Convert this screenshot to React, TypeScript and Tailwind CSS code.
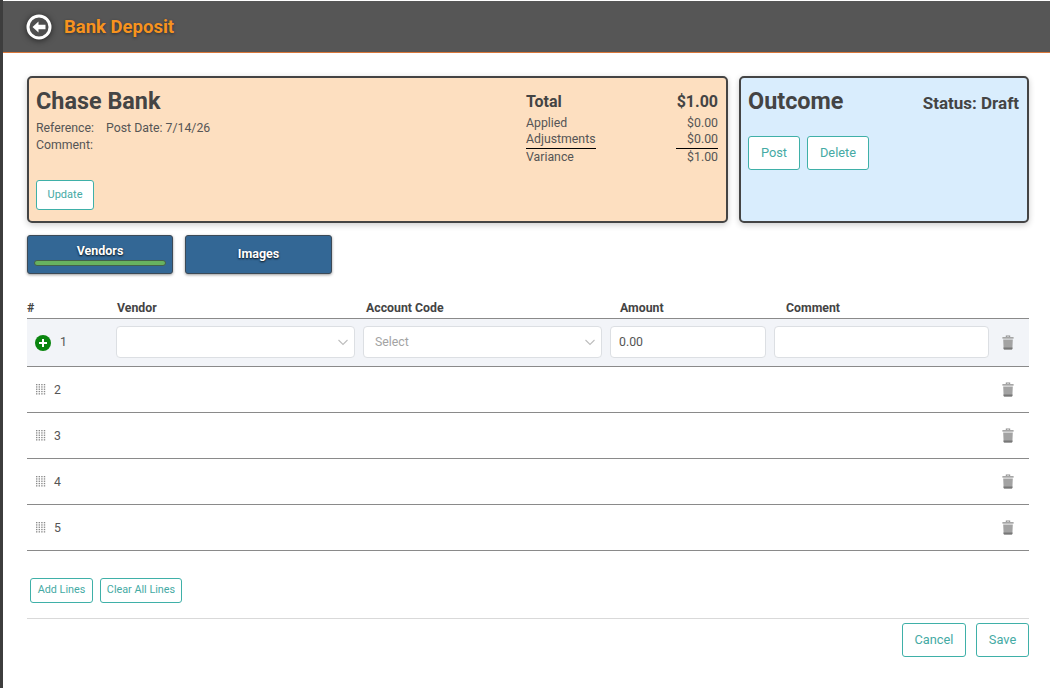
import React from 'react';

const font = { fontFamily: 'Roboto, sans-serif' };

function OutlineButton({ label, className }: { label: string; className: string }) {
  return (
    <button className={`rounded-[3px] border border-[#3fb0a8] bg-white text-[#45aaa4] ${className}`}>
      {label}
    </button>
  );
}

function Chevron() {
  return (
    <svg width="12" height="12" viewBox="0 0 12 12" className="absolute right-[5px] top-[9px]" fill="none" stroke="#bdbdbd" strokeWidth="1.1">
      <path d="M1.5 4 L6 8.5 L10.5 4" />
    </svg>
  );
}

function Trash() {
  return (
    <svg width="12" height="15" viewBox="0 0 12 15">
      <path d="M3.8 2V.6h4.4V2H7.2v-.5H4.8V2z" fill="#8f8f8f" />
      <path d="M0.4 2h11.2v1.7H0.4z" fill="#a6a6a6" />
      <path d="M1.2 4.6h9.6l-.4 8.8c0 .6-.5 1-1.1 1H2.7c-.6 0-1.1-.4-1.1-1z" fill="#a3a3a3" />
      <path d="M1.5 12.4h9l-.1 1c0 .6-.5 1-1.1 1H2.7c-.6 0-1.1-.4-1.1-1z" fill="#787878" />
    </svg>
  );
}

function Grip() {
  return (
    <svg width="10" height="11" viewBox="0 0 10 11" fill="#8a8a8a">
      {[0, 2.3, 4.6, 6.9, 9.2].map(y =>
        [0, 2.6, 5.2, 7.8].map(x => <rect key={`${x}-${y}`} x={x} y={y} width="1.4" height="1.3" />)
      )}
    </svg>
  );
}

function BackIcon() {
  return (
    <svg width="26" height="26" viewBox="0 0 26 26" className="drop-shadow-[0_1px_3px_rgba(0,0,0,0.6)]">
      <circle cx="13" cy="13" r="11" fill="#4f4f4f" stroke="white" strokeWidth="3" />
      <path d="M6.5 13 L12.5 7.5 V10.7 H19.5 V15.3 H12.5 V18.5 Z" fill="white" />
    </svg>
  );
}

function AddIcon() {
  return (
    <svg width="16" height="16" viewBox="0 0 16 16">
      <circle cx="8" cy="8" r="8" fill="#0a850f" />
      <path d="M8 4v8M4 8h8" stroke="white" strokeWidth="2" />
    </svg>
  );
}

function AmountRow({ label, value, underline }: { label: string; value: string; underline?: boolean }) {
  return (
    <div className="flex justify-between text-[12.3px] leading-[16px] text-[#555]">
      <span className={underline ? 'border-b border-black pb-px' : ''}>{label}</span>
      <span className={underline ? 'w-[42px] border-b border-black pb-px text-right' : ''}>{value}</span>
    </div>
  );
}

export default function App() {
  return (
    <div className="flex h-[688px] w-[1050px] overflow-hidden bg-white" style={font}>
      <div className="w-[3px] shrink-0 bg-[#3d3d3d]" />
      <div className="min-w-0 flex-1">
        <header className="mt-px flex h-[52px] items-center gap-[12px] border-b border-[#d9773a] bg-[#565656] pl-[23px]">
          <BackIcon />
          <h1 className="pt-[2px] text-[18.5px] font-bold text-[#f7931e] [text-shadow:0_1px_3px_rgba(0,0,0,0.45)]">Bank Deposit</h1>
        </header>

        <div className="mt-[23px] flex gap-[11px] pl-[24px] pr-[21px]">
          <section className="flex h-[147px] w-[701px] justify-between rounded-[5px] border-2 border-[#444] bg-[#fddfc0] pl-[7px] pr-[8px] pt-[8px] shadow-[0_2px_6px_rgba(0,0,0,0.2)]">
            <div>
              <h2 className="text-[23.4px] font-bold leading-[30px] text-[#444]">Chase Bank</h2>
              <div className="mt-[4px] flex gap-[12px] text-[12.3px] leading-[16.5px] text-[#555]">
                <span>Reference:</span>
                <span>Post Date: 7/14/26</span>
              </div>
              <div className="text-[12.3px] leading-[16.5px] text-[#555]">Comment:</div>
              <OutlineButton label="Update" className="mt-[27px] block h-[30px] w-[58px] text-[11px]" />
            </div>
            <div className="w-[192px] pt-[5px]">
              <div className="flex justify-between text-[16px] font-bold leading-[22px] text-[#444]">
                <span>Total</span>
                <span>$1.00</span>
              </div>
              <div className="mt-[2px]">
                <AmountRow label="Applied" value="$0.00" />
                <AmountRow label="Adjustments" value="$0.00" underline />
                <AmountRow label="Variance" value="$1.00" />
              </div>
            </div>
          </section>

          <section className="h-[147px] w-[290px] rounded-[5px] border-2 border-[#444] bg-[#d9edfd] pl-[7px] pr-[8px] pt-[8px] shadow-[0_2px_6px_rgba(0,0,0,0.2)]">
            <div className="flex h-[30px] items-center justify-between">
              <h2 className="text-[23.4px] font-bold leading-[30px] text-[#444]">Outcome</h2>
              <span className="pt-[5px] text-[17px] font-bold leading-[25px] text-[#444]">Status: Draft</span>
            </div>
            <div className="mt-[20px] flex gap-[7px]">
              <OutlineButton label="Post" className="h-[34px] w-[52px] text-[12.8px]" />
              <OutlineButton label="Delete" className="h-[34px] w-[62px] text-[12.8px]" />
            </div>
          </section>
        </div>

        <div className="mt-[12px] flex gap-[12px] pl-[24px]">
          <button className="flex h-[39px] w-[146px] flex-col items-center rounded-[3px] border border-[#3c4a57] bg-[#336795] px-[6px] pt-[7px] text-[12.5px] font-bold leading-[16px] text-white shadow-[0_1px_3px_rgba(0,0,0,0.4)] [text-shadow:0_1px_2px_rgba(0,0,0,0.9)]">
            <span>Vendors</span>
            <span className="mt-[1px] block h-[6px] w-full rounded-[3px] border border-[#44604a] bg-[#68b25f]" />
          </button>
          <button className="h-[39px] w-[147px] rounded-[3px] border border-[#3c4a57] bg-[#336795] text-[12.5px] font-bold text-white shadow-[0_1px_3px_rgba(0,0,0,0.4)] [text-shadow:0_1px_2px_rgba(0,0,0,0.9)]">
            Images
          </button>
        </div>

        <div className="ml-[24px] mr-[21px] mt-[26px]">
          <div className="flex h-[19px] items-center border-b border-[#8a8a8a] pb-[2px] text-[12.3px] font-bold leading-[16px] text-[#444]">
            <span className="w-[90px]">#</span>
            <span className="w-[249px]">Vendor</span>
            <span className="w-[254px]">Account Code</span>
            <span className="w-[166px]">Amount</span>
            <span>Comment</span>
          </div>

          <div className="flex h-[48px] items-center border-b border-[#8a8a8a] bg-[#f2f4f8] pb-[2px]">
            <div className="flex w-[89px] items-center pl-[8px] pt-[2px] text-[12.3px] text-[#555]">
              <AddIcon />
              <span className="ml-[9px]">1</span>
            </div>
            <div className="relative h-[32px] w-[239px] rounded-[4px] border border-[#dcdfe3] bg-white">
              <Chevron />
            </div>
            <div className="relative ml-[8px] flex h-[32px] w-[239px] items-center rounded-[4px] border border-[#dcdfe3] bg-white pl-[11px] pt-[1px] text-[12.3px] text-[#a3a3a3]">
              Select
              <Chevron />
            </div>
            <div className="ml-[8px] flex h-[32px] w-[156px] items-center rounded-[4px] border border-[#dcdfe3] bg-white pl-[8px] pt-[1px] text-[12.3px] text-[#555]">
              0.00
            </div>
            <div className="ml-[8px] h-[32px] w-[215px] rounded-[4px] border border-[#dcdfe3] bg-white" />
            <div className="ml-[13px] pt-[1px]">
              <Trash />
            </div>
          </div>

          {[2, 3, 4, 5].map(n => (
            <div key={n} className="flex h-[46px] items-center justify-between border-b border-[#8a8a8a] pl-[9px] pr-[15px] text-[12.3px] text-[#555]">
              <div className="flex items-center gap-[8px]">
                <Grip />
                <span className="pt-px">{n}</span>
              </div>
              <Trash />
            </div>
          ))}

          <div className="mt-[27px] flex gap-[7px] pl-[3px]">
            <OutlineButton label="Add Lines" className="h-[25px] w-[63px] text-[10.8px]" />
            <OutlineButton label="Clear All Lines" className="h-[25px] w-[82px] text-[10.8px]" />
          </div>

          <div className="mt-[15px] flex justify-end gap-[10px] border-t border-[#d9d9d9] pt-[4px]">
            <OutlineButton label="Cancel" className="h-[34px] w-[64px] text-[12.8px]" />
            <OutlineButton label="Save" className="h-[34px] w-[53px] text-[12.8px]" />
          </div>
        </div>
      </div>
    </div>
  );
}
